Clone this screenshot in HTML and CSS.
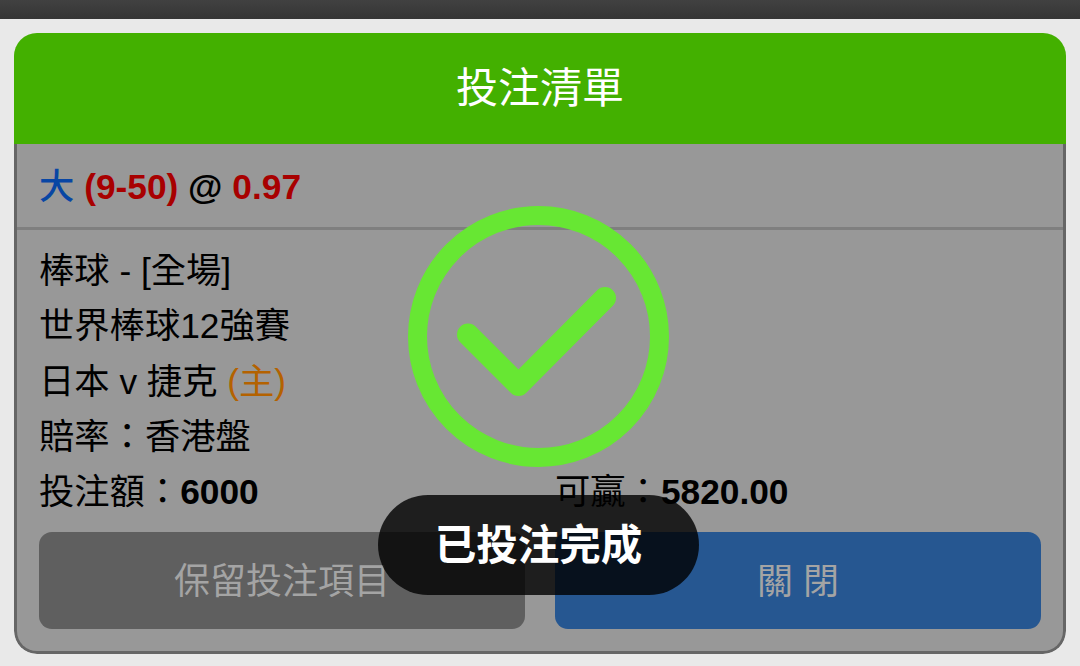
FILE: index.html
```html
<!DOCTYPE html>
<html lang="zh-Hant">
<head>
    <meta charset="UTF-8">
    <meta name="viewport" content="width=device-width, initial-scale=1.0">
    <title>投注清單</title>
    <link rel="stylesheet" href="styles.css">
</head>
<body>
    <div class="topbar"></div>

    <div class="bet-slip">
        <h2 class="slip-title">投注清單</h2>

        <div class="slip-body">
            <div class="pick">
                <span class="side">大</span> <span class="red">(9-50)</span> @ <span class="red">0.97</span>
            </div>

            <div class="details">
                <div class="row">棒球 - [全場]</div>
                <div class="row">世界棒球12強賽</div>
                <div class="row">日本 v 捷克 <span class="home">(主)</span></div>
                <div class="row">賠率：香港盤</div>
                <div class="row amounts">
                    <div>投注額：<b>6000</b></div>
                    <div>可贏：<b>5820.00</b></div>
                </div>
            </div>

            <div class="buttons">
                <button class="btn btn-keep">保留投注項目</button>
                <button class="btn btn-close">關 閉</button>
            </div>
        </div>
    </div>

    <!-- success message -->
    <svg class="success-icon" viewBox="0 0 261 261">
        <circle cx="130.5" cy="130.5" r="121"/>
        <path d="M60 128.5 L110.5 179 L197 92"/>
    </svg>
    <div class="toast">已投注完成</div>
</body>
</html>
```

FILE: styles.css
```css
body {
    margin: 0;
    height: 666px;
    position: relative;
    overflow: hidden;
    background-color: #e9e9e9;
    color: #000;
    font-family: "Liberation Sans", "Noto Sans CJK TC", sans-serif;
    font-size: 35.3px;
}

.topbar {
    height: 19px;
    background: linear-gradient(#414141, #353535);
}

.bet-slip {
    box-sizing: border-box;
    height: 621px;
    margin: 14px 14px 0;
    display: flex;
    flex-direction: column;
    border-radius: 23px;
    overflow: hidden;
}

.slip-title {
    margin: 0;
    height: 111px;
    line-height: 111px;
    background-color: #43b000;
    color: #fff;
    font-size: 42px;
    font-weight: 400;
    text-align: center;
}

.slip-body {
    flex: 1;
    border: 3px solid #666;
    border-top: none;
    border-radius: 0 0 23px 23px;
    background-color: #989898;
}

.pick {
    height: 83px;
    line-height: 85px;
    padding-left: 22px;
    border-bottom: 3px solid #7f7f7f;
    font-weight: 700;
}

.side {
    color: #0846a4;
    font-weight: 500;
}

.red {
    color: #a80000;
}

.details {
    padding: 13px 22px 0;
}

.row {
    height: 55.3px;
    line-height: 55.3px;
    white-space: nowrap;
}

.home {
    color: #b46200;
}

.amounts {
    display: grid;
    grid-template-columns: 1fr 1fr;
    column-gap: 30px;
}

.buttons {
    display: grid;
    grid-template-columns: 1fr 1fr;
    column-gap: 30px;
    padding: 12.5px 22px 0;
}

.btn {
    height: 97px;
    padding: 0 0 4px;
    border: none;
    border-radius: 13px;
    color: #a4a4a4;
    font-family: inherit;
    font-size: 36px;
}

.btn-keep {
    background-color: #5f5f5f;
}

.btn-close {
    background-color: #265791;
}

.success-icon {
    position: absolute;
    left: 408px;
    top: 206px;
    width: 261px;
    height: 261px;
    fill: none;
    stroke: #67e733;
    stroke-width: 19;
}

.success-icon path {
    stroke-width: 22;
    stroke-linecap: round;
    stroke-linejoin: round;
}

.toast {
    position: absolute;
    left: 378px;
    top: 495px;
    width: 321px;
    height: 100px;
    line-height: 102px;
    border-radius: 50px;
    background-color: rgba(0, 0, 0, 0.8);
    color: #fff;
    font-size: 41.5px;
    font-weight: 700;
    text-align: center;
}
```
